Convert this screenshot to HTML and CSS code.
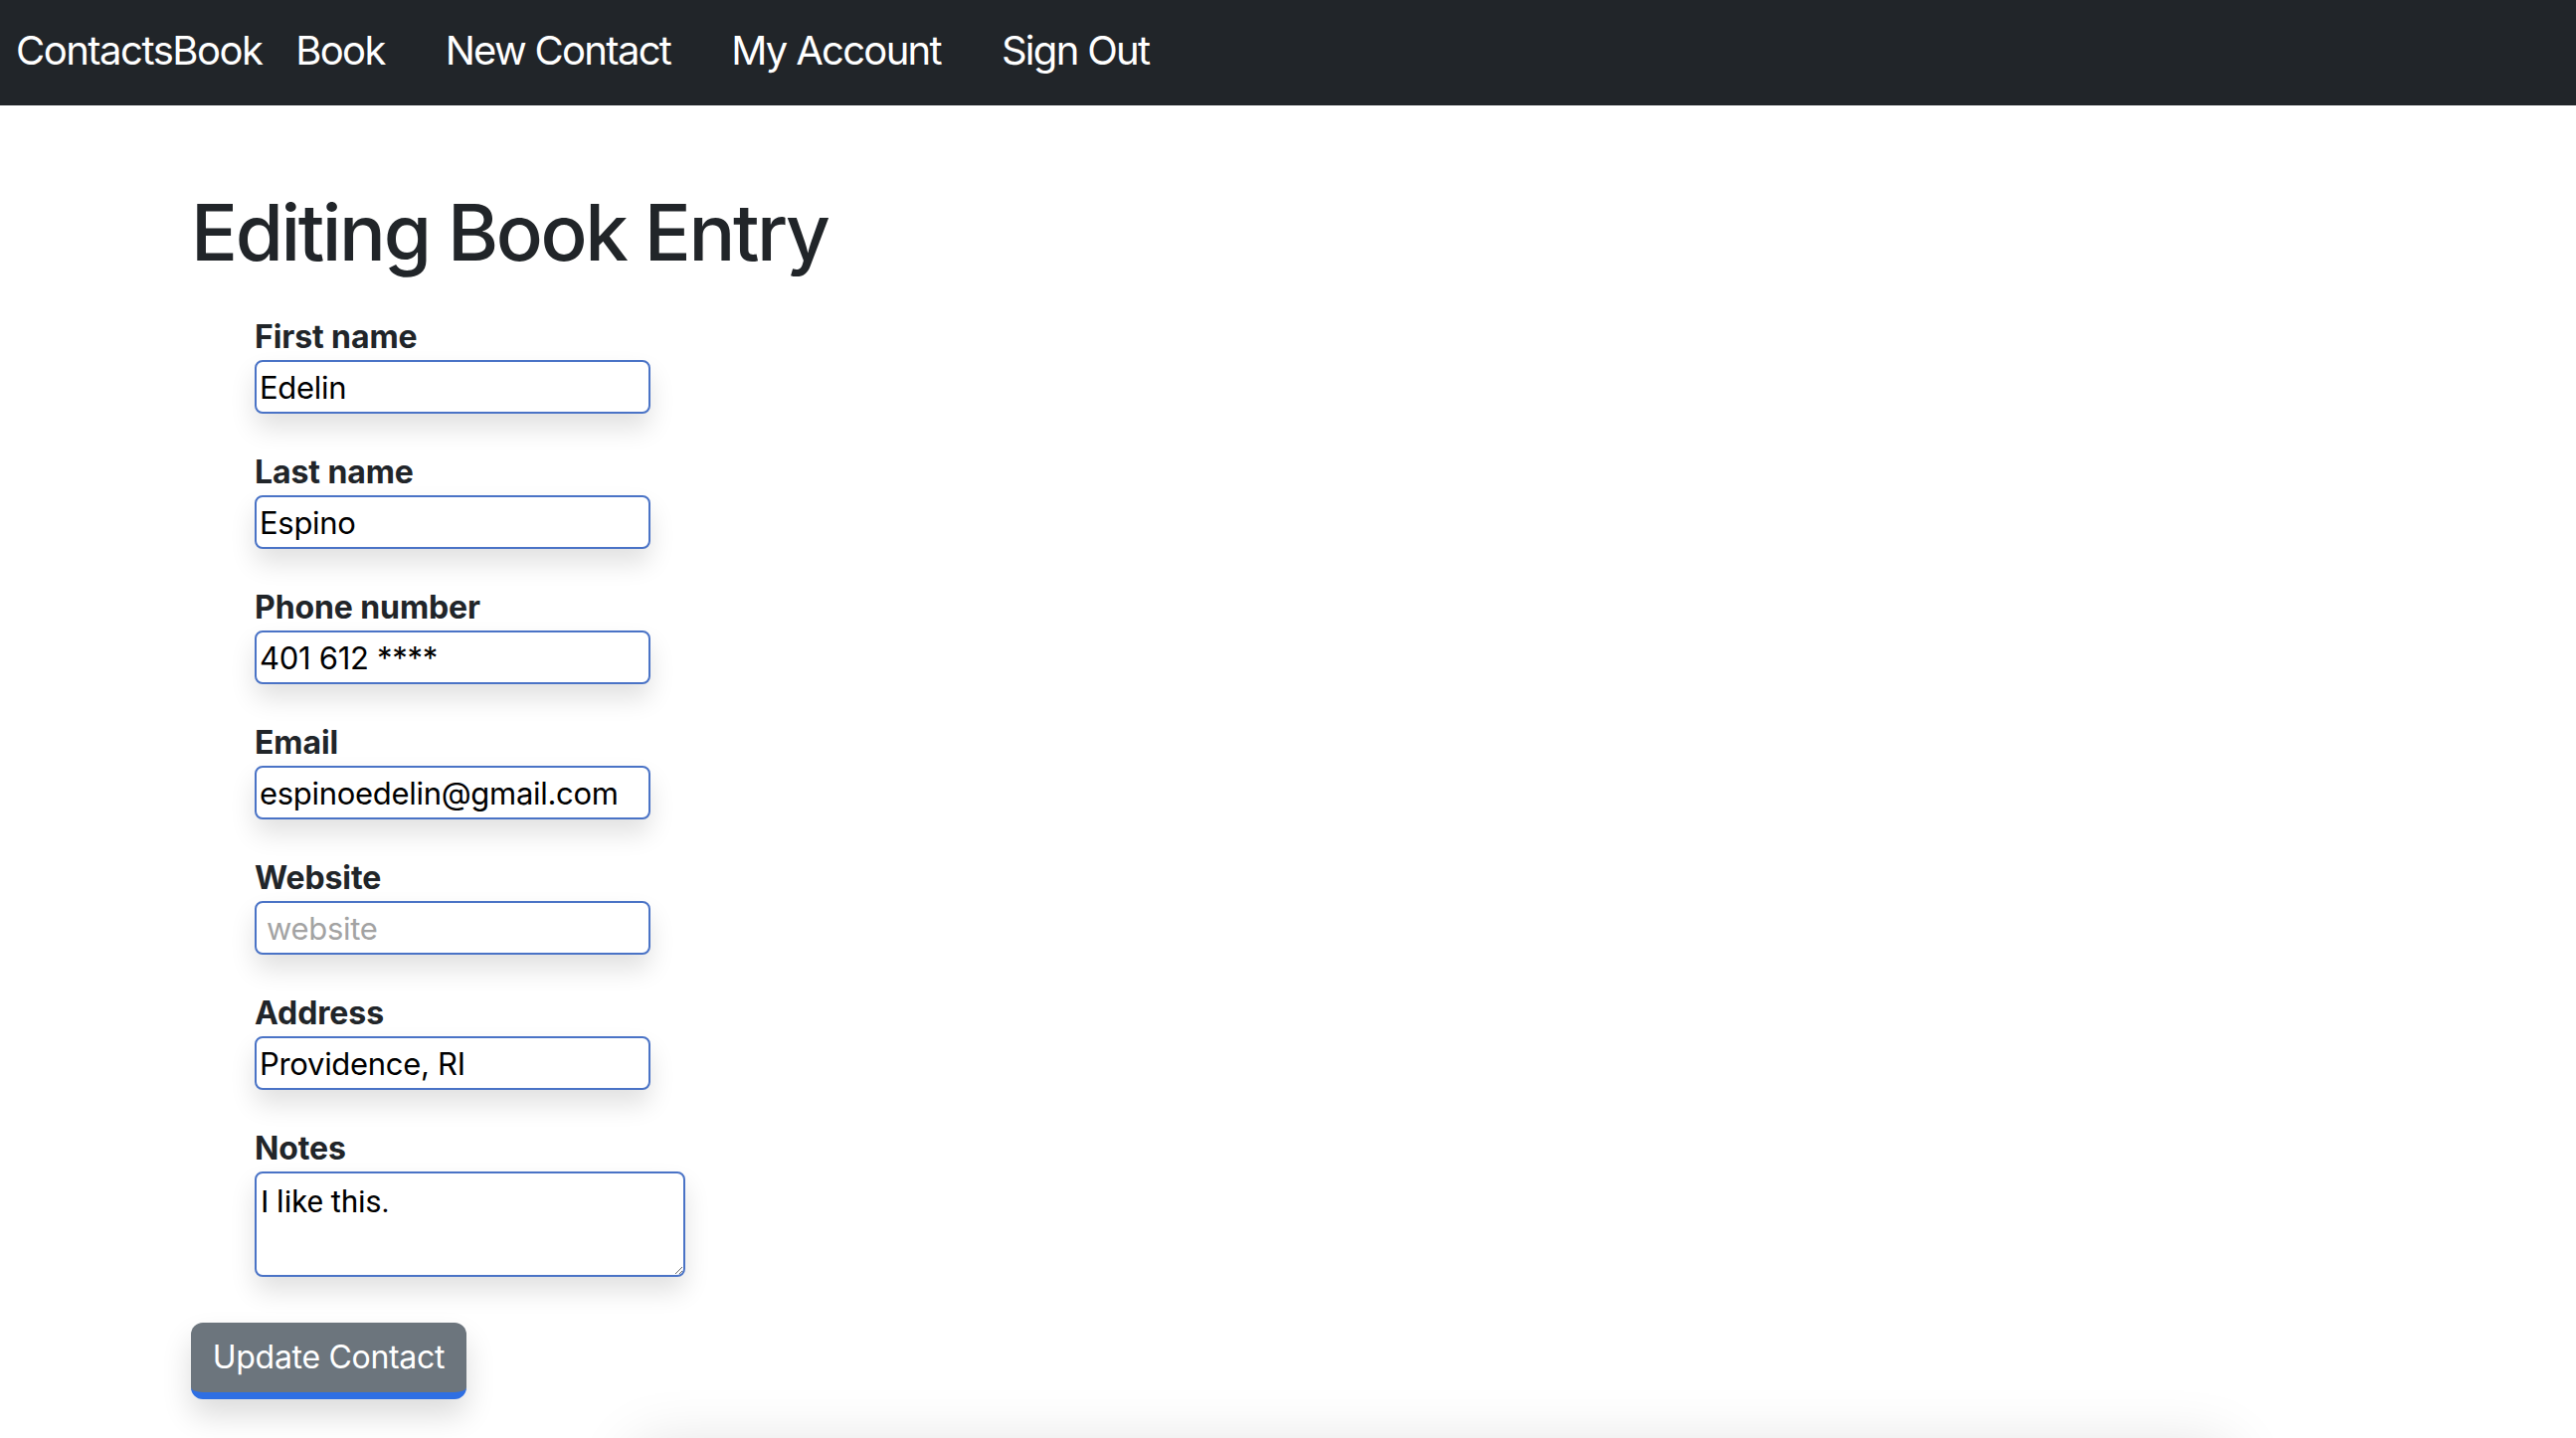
FILE: index.html
```html
<!DOCTYPE html>
<html lang="en">
<head>
<meta charset="utf-8">
<title>ContactsBook - Editing Book Entry</title>
<link rel="stylesheet" href="styles.css">
</head>
<body>
<nav class="navbar">
  <a class="brand" href="#">ContactsBook</a>
  <ul class="nav-links">
    <li><a href="#">Book</a></li>
    <li><a href="#">New Contact</a></li>
    <li><a href="#">My Account</a></li>
    <li><a href="#">Sign Out</a></li>
  </ul>
</nav>
<main class="container">
  <h1 class="title">Editing Book Entry</h1>
  <form class="entry-form">
    <div class="fields">
      <div class="field">
        <label for="first">First name</label>
        <input id="first" class="input" type="text" value="Edelin">
      </div>
      <div class="field">
        <label for="last">Last name</label>
        <input id="last" class="input" type="text" value="Espino">
      </div>
      <div class="field">
        <label for="phone">Phone number</label>
        <input id="phone" class="input" type="text" value="401 612 ****">
      </div>
      <div class="field">
        <label for="email">Email</label>
        <input id="email" class="input" type="text" value="espinoedelin@gmail.com">
      </div>
      <div class="field">
        <label for="website">Website</label>
        <input id="website" class="input input-empty" type="text" placeholder="website">
      </div>
      <div class="field">
        <label for="address">Address</label>
        <input id="address" class="input" type="text" value="Providence, RI">
      </div>
      <div class="field">
        <label for="notes">Notes</label>
        <textarea id="notes" class="input textarea">I like this.</textarea>
      </div>
    </div>
    <button type="button" class="btn-submit">Update Contact</button>
  </form>
  <div class="below-fold"></div>
</main>
</body>
</html>
```

FILE: styles.css
```css
* { box-sizing: border-box; }

html, body {
  margin: 0;
  padding: 0;
  background: #ffffff;
  overflow: hidden;
}

body {
  font-family: "Inter", "Liberation Sans", sans-serif;
  color: #212529;
  height: 1446px;
}

.navbar {
  display: flex;
  align-items: center;
  height: 106px;
  background: #212529;
  padding: 0 0 6px 16px;
}

.brand {
  color: #ffffff;
  text-decoration: none;
  font-size: 40px;
  letter-spacing: -1.5px;
  margin-right: 34px;
}

.nav-links {
  display: flex;
  list-style: none;
  margin: 0;
  padding: 0;
  gap: 61px;
}

.nav-links a {
  color: #ffffff;
  text-decoration: none;
  font-size: 40px;
  letter-spacing: -1.7px;
}

.container {
  padding: 80px 0 0 192px;
}

.title {
  margin: 0;
  font-size: 78px;
  line-height: 96px;
  font-weight: 500;
  letter-spacing: -2.4px;
}

.entry-form {
  margin-top: 38px;
}

.fields {
  display: flex;
  flex-direction: column;
  gap: 40px;
  padding-left: 64px;
}

.field {
  display: flex;
  flex-direction: column;
  align-items: flex-start;
  gap: 4px;
}

.field label {
  font-size: 32px;
  line-height: 38px;
  font-weight: 700;
  letter-spacing: -0.1px;
}

.input {
  width: 398px;
  height: 54px;
  border: 2px solid #4a73c6;
  border-radius: 8px;
  padding: 0 0 0 3px;
  font-family: "Inter", "Liberation Sans", sans-serif;
  font-size: 31px;
  letter-spacing: -0.3px;
  color: #000000;
  background: #ffffff;
  box-shadow: 0 14px 26px rgba(0, 0, 0, 0.12);
  outline: none;
}

.input-empty {
  padding-left: 10px;
}

.input::placeholder {
  color: #a3a3a3;
}

.textarea {
  width: 433px;
  height: 106px;
  padding: 10px 4px 4px;
  resize: vertical;
  line-height: 38px;
  letter-spacing: 0;
  font-family: "Roboto", "Liberation Sans", sans-serif;
}

.btn-submit {
  margin-top: 46px;
  width: 277px;
  height: 77px;
  border: none;
  border-bottom: 7px solid #2f6fe3;
  border-radius: 12px;
  background: #6c757d;
  color: #ffffff;
  font-family: "Inter", "Liberation Sans", sans-serif;
  font-size: 32px;
  letter-spacing: -0.3px;
  padding: 0 0 2px;
  box-shadow: 0 16px 30px rgba(0, 0, 0, 0.14);
  cursor: pointer;
}

.below-fold {
  margin: 56px 0 0 448px;
  width: 1600px;
  height: 200px;
  background: #ffffff;
  box-shadow: 0 -6px 60px rgba(0, 0, 0, 0.14);
}
```
